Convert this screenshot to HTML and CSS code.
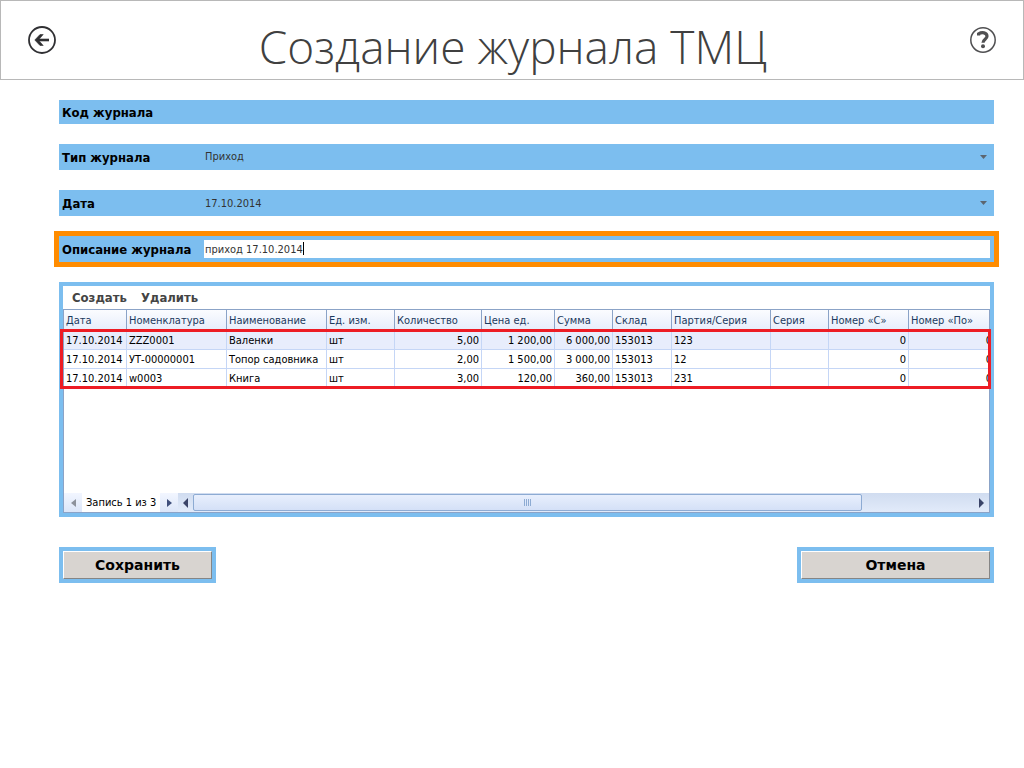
FILE: index.html
```
<!DOCTYPE html>
<html lang="ru">
<head>
<meta charset="utf-8">
<title>Создание журнала ТМЦ</title>
<meta name="viewport" content="width=device-width, initial-scale=1">
<link rel="stylesheet" href="styles.css">
</head>
<body>
<header class="topbar">
  <button class="icon-button" type="button" aria-label="Назад">
    <svg width="28" height="28" viewBox="0 0 28 28" fill="none" stroke="#303033">
      <circle cx="14" cy="14" r="13" stroke-width="1.8"/>
      <path d="M21 14H9" stroke-width="2.6"/>
      <path d="M15.200 8.500H12L6.800 14l5.200 5.500h3.200L10.400 14z" fill="#303033" stroke-width=".6"/>
    </svg>
  </button>
  <h1 class="title">Создание журнала ТМЦ</h1>
  <button class="icon-button" type="button" aria-label="Справка">
    <svg width="26" height="26" viewBox="0 0 26 26" fill="none" stroke="#505052">
      <circle cx="13" cy="13" r="12.200" stroke-width="1.500"/>
      <path d="M8.600 8.400V6.800C12 4.800 17 5.400 17 9.200c0 3-4 3-4 6.600" stroke-width="3.200"/>
      <circle cx="13" cy="19.200" r="2" fill="#505052" stroke="none"/>
    </svg>
  </button>
</header>

<form class="form">
  <div class="field field-code">
    <label class="label" for="code">Код журнала</label>
    <input class="control" id="code" type="text" readonly>
  </div>
  <div class="field">
    <label class="label" for="type">Тип журнала</label>
    <select class="control" id="type"><option>Приход</option></select>
    <svg class="arrow" width="7" height="4" viewBox="0 0 7 4"><path d="M0 0h7L3.500 4z" fill="#5c6670"/></svg>
  </div>
  <div class="field">
    <label class="label" for="date">Дата</label>
    <input class="control" id="date" type="text" value="17.10.2014">
    <svg class="arrow" width="7" height="4" viewBox="0 0 7 4"><path d="M0 0h7L3.500 4z" fill="#5c6670"/></svg>
  </div>
  <div class="field field-active">
    <label class="label" for="about">Описание журнала</label>
    <div class="entry">
      <input class="control" id="about" type="text" value="приход 17.10.2014">
      <span class="caret"></span>
    </div>
  </div>

  <section class="panel">
    <div class="toolbar">
      <button class="tool" type="button">Создать</button>
      <button class="tool" type="button">Удалить</button>
    </div>
    <div class="grid">
      <div class="viewport">
        <table class="table">
          <colgroup>
            <col class="w-date"><col class="w-name"><col class="w-name"><col class="w-unit">
            <col class="w-count"><col class="w-price"><col class="w-sum"><col class="w-store">
            <col class="w-batch"><col class="w-sum"><col class="w-from"><col>
          </colgroup>
          <thead>
            <tr><th>Дата</th><th>Номенклатура</th><th>Наименование</th><th>Ед. изм.</th><th>Количество</th><th>Цена ед.</th><th>Сумма</th><th>Склад</th><th>Партия/Серия</th><th>Серия</th><th>Номер «С»</th><th>Номер «По»</th></tr>
          </thead>
          <tbody>
            <tr class="selected"><td>17.10.2014</td><td>ZZZ0001</td><td>Валенки</td><td>шт</td><td class="num">5,00</td><td class="num">1 200,00</td><td class="num">6 000,00</td><td>153013</td><td>123</td><td></td><td class="num">0</td><td class="num">0</td></tr>
            <tr><td>17.10.2014</td><td>УТ-00000001</td><td>Топор садовника</td><td>шт</td><td class="num">2,00</td><td class="num">1 500,00</td><td class="num">3 000,00</td><td>153013</td><td>12</td><td></td><td class="num">0</td><td class="num">0</td></tr>
            <tr><td>17.10.2014</td><td>w0003</td><td>Книга</td><td>шт</td><td class="num">3,00</td><td class="num">120,00</td><td class="num">360,00</td><td>153013</td><td>231</td><td></td><td class="num">0</td><td class="num">0</td></tr>
          </tbody>
        </table>
      </div>
      <div class="highlight"></div>
      <div class="footer">
        <button class="step" type="button" aria-label="Предыдущая запись"><svg width="5" height="8" viewBox="0 0 5 8"><path d="M5 0v8L0 4z" fill="#8d929c"/></svg></button>
        <span class="record">Запись 1 из 3</span>
        <button class="step" type="button" aria-label="Следующая запись"><svg width="5" height="8" viewBox="0 0 5 8"><path d="M0 0v8l5-4z" fill="#3f4f7c"/></svg></button>
        <div class="scrollbar">
          <button class="scroll-step" type="button" aria-label="Влево"><svg width="5" height="10" viewBox="0 0 5 10"><path d="M5 0v10L0 5z" fill="#3a4468"/></svg></button>
          <div class="track"><div class="thumb"><i></i><i></i><i></i><i></i></div></div>
          <button class="scroll-step" type="button" aria-label="Вправо"><svg width="5" height="10" viewBox="0 0 5 10"><path d="M0 0v10l5-5z" fill="#3a4468"/></svg></button>
        </div>
      </div>
    </div>
  </section>

  <div class="actions">
    <div class="frame frame-save"><button class="action" type="button">Сохранить</button></div>
    <div class="frame frame-cancel"><button class="action" type="button">Отмена</button></div>
  </div>
</form>
</body>
</html>
```
FILE: styles.css
```
* { box-sizing: border-box; }

body {
  margin: 0;
  background: #fff;
  color: #000;
  font: 11px/14px "DejaVu Sans Condensed", "DejaVu Sans", sans-serif;
}

button, input, select { font: inherit; color: inherit; margin: 0; padding: 0; border: 0; background: none; border-radius: 0; }
svg { display: block; flex: none; }

.topbar {
  display: flex;
  align-items: center;
  justify-content: space-between;
  height: 80px;
  padding: 0 27px;
  border: 1px solid #b8b8b8;
}

.title {
  margin: 0;
  padding-top: 12px;
  color: #404040;
  font: 300 46px/64px "Open Sans", "Noto Sans", sans-serif;
  white-space: nowrap;
}

.form {
  display: flex;
  flex-direction: column;
  gap: 20px;
  padding: 20px 30px 20px 59px;
}

.field {
  position: relative;
  display: flex;
  align-items: center;
  height: 26px;
  padding: 0 4px 0 3px;
  background: #7cbeef;
}
.field-code { height: 24px; }
.field-active { outline: 5px solid #ff8c00; }

.label {
  width: 142px;
  flex: none;
  padding-top: 1px;
  font-weight: bold;
  font-size: 13px;
  line-height: 18px;
  white-space: nowrap;
}

.control {
  flex: 1;
  min-width: 0;
  width: 100%;
  height: 18px;
  padding: 0 1px;
  color: #333;
  appearance: none;
  outline: none;
}

.arrow { position: absolute; right: 7px; top: 11px; pointer-events: none; }

.entry { position: relative; display: flex; flex: 1; background: #fff; }
.caret { position: absolute; left: 99px; top: 2px; width: 1px; height: 13px; background: #000; }

.panel { border: 4px solid #7cbeef; height: 235px; display: flex; flex-direction: column; }

.toolbar { display: flex; gap: 14px; height: 23px; padding: 0 9px; flex: none; }
.tool { color: #444; font-size: 13px; font-weight: bold; }

.grid {
  position: relative;
  flex: 1;
  display: flex;
  flex-direction: column;
  border: 1px solid #8ba3c7;
}
.viewport { flex: 1; overflow: hidden; }

.table { width: calc(100% + 6px); table-layout: fixed; border-collapse: separate; border-spacing: 0; }
.w-date { width: 63px; }
.w-name { width: 100px; }
.w-unit { width: 68px; }
.w-count { width: 87px; }
.w-price { width: 73px; }
.w-sum { width: 58px; }
.w-store { width: 59px; }
.w-batch { width: 99px; }
.w-from { width: 80px; }

.table th, .table td {
  height: 19px;
  padding: 2px 2px 0;
  text-align: left;
  font-weight: normal;
  white-space: nowrap;
  border-right: 1px solid #c5d6f6;
  border-bottom: 1px solid #c5d6f6;
}
.table th {
  height: 21px;
  color: #1c3a5e;
  background: linear-gradient(#fbfcff, #e6edfb);
  border-color: #8ba3c7;
}
.table .num { text-align: right; }
.selected td { background: #e8edfc; }

.highlight {
  position: absolute;
  left: -4px;
  right: -2px;
  top: 19px;
  height: 60px;
  border: 3px solid #ed1c24;
  pointer-events: none;
}

.footer { display: flex; height: 19px; flex: none; }
.step, .scroll-step { display: grid; place-items: center; width: 18px; flex: none; background: linear-gradient(#f2f6ff, #dce6f9); }
.record { padding: 3px 4px 0; width: 78px; white-space: nowrap; }
.scrollbar { display: flex; flex: 1; background: linear-gradient(#d0dcf0, #e2ebfa); }
.scroll-step { width: 15px; background: none; }
.track { flex: 1; display: grid; grid-template-columns: 6fr 1fr; padding: 1px 0; }
.thumb {
  display: flex;
  align-items: center;
  justify-content: center;
  gap: 1px;
  border: 1px solid #8dabd3;
  border-radius: 2px;
  background: linear-gradient(#e8effd, #d4e0f7);
}
.thumb i { width: 1px; height: 7px; background: #8dabd3; }

.actions { display: flex; justify-content: space-between; padding-top: 10px; }
.frame { display: flex; height: 36px; padding: 4px; background: #7cbeef; }
.frame-save { width: 157px; }
.frame-cancel { width: 197px; }
.action {
  flex: 1;
  font-family: "DejaVu Sans", sans-serif;
  font-size: 14px;
  font-weight: bold;
  background: #d8d4d0;
  border: 1px solid;
  border-color: #fff #858585 #858585 #fff;
}
```
